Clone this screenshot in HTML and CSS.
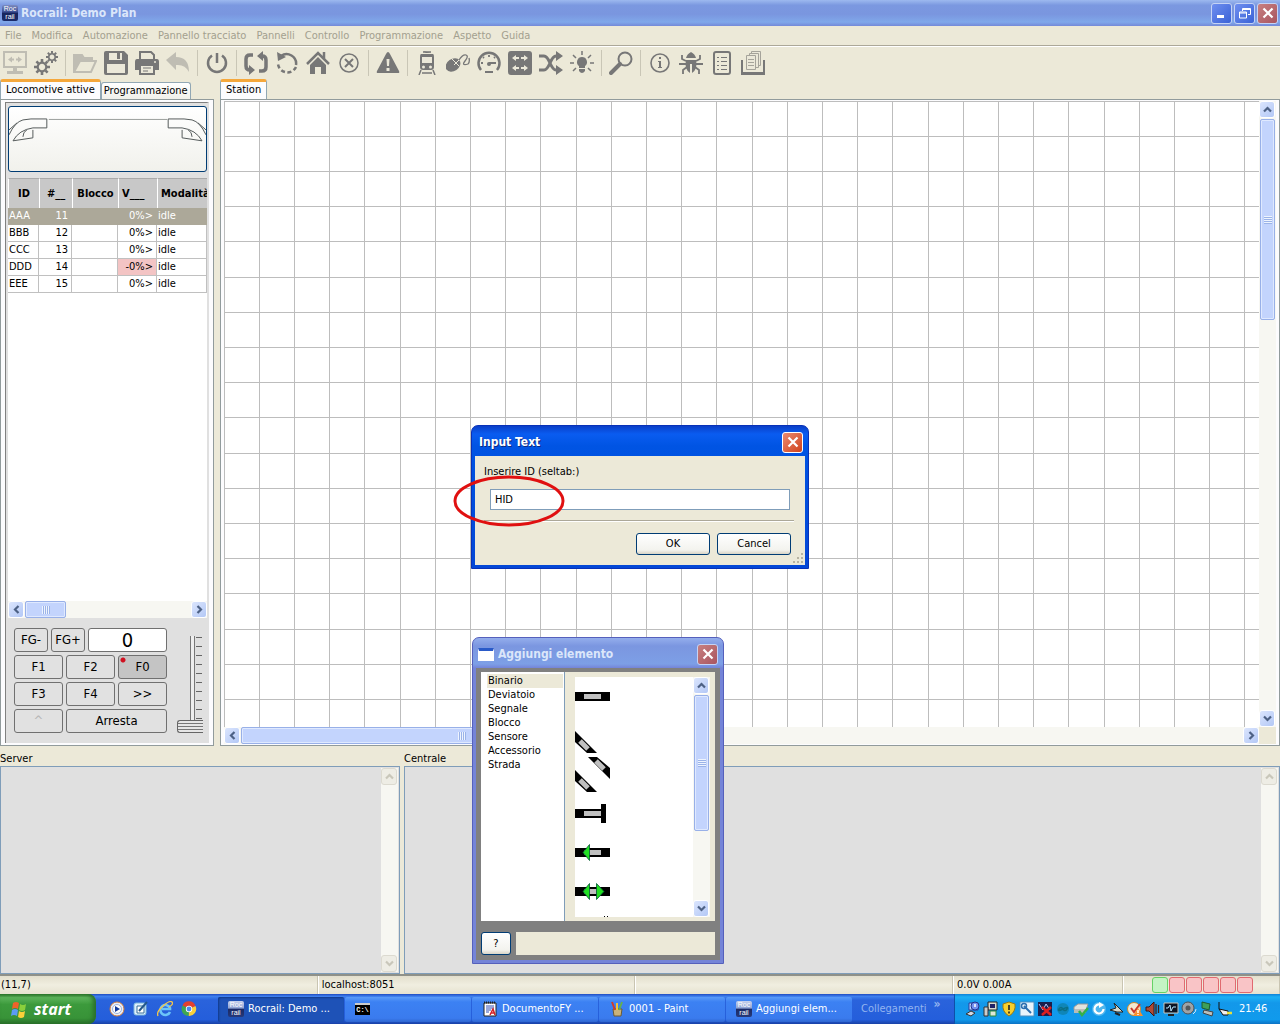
FILE: index.html
```html
<!DOCTYPE html>
<html lang="it">
<head>
<meta charset="utf-8">
<title>Rocrail: Demo Plan</title>
<link rel="stylesheet" href="styles.css">
</head>
<body>
<svg class="defs" aria-hidden="true">
  <defs>
    <pattern id="grid" width="176" height="176" patternUnits="userSpaceOnUse">
      <path d="M.5 0v176M35.500 0v176M70.500 0v176M105.500 0v176M140.500 0v176M0 .5h176M0 35.500h176M0 70.500h176M0 105.500h176M0 140.500h176" stroke="#bdbdbd"/>
    </pattern>
  </defs>
  <symbol id="up" viewBox="0 0 9 9"><path d="M1 6.500l3.500-3.500L8 6.500" fill="none" stroke="currentColor" stroke-width="2.200"/></symbol>
  <symbol id="down" viewBox="0 0 9 9"><path d="M1 2.500L4.500 6 8 2.500" fill="none" stroke="currentColor" stroke-width="2.200"/></symbol>
  <symbol id="left" viewBox="0 0 9 9"><path d="M6.500 1L3 4.500 6.500 8" fill="none" stroke="currentColor" stroke-width="2.200"/></symbol>
  <symbol id="right" viewBox="0 0 9 9"><path d="M2.500 1L6 4.500 2.500 8" fill="none" stroke="currentColor" stroke-width="2.200"/></symbol>
  <symbol id="cross" viewBox="0 0 12 12"><path d="M1.500 1.500l9 9M10.500 1.500l-9 9" stroke="#fff" stroke-width="2.200"/></symbol>
  <symbol id="gear" viewBox="-8 -8 16 16"><circle r="4.300" fill="none" stroke="currentColor" stroke-width="2.200"/><g stroke="currentColor" stroke-width="2.600"><path d="M0-8v3M0 8v-3M-8 0h3M8 0h-3M-5.600-5.600l2 2M5.600 5.600l-2-2M-5.600 5.600l2-2M5.600-5.600l-2 2"/></g></symbol>
</svg>

<header class="titlebar">
  <span class="badge">Roc<br>rail</span>
  <h1>Rocrail: Demo Plan</h1>
  <div class="caption">
    <button class="cap" aria-label="Riduci a icona"><svg width="12" height="12"><path d="M1 8h7v3H1z" fill="#fff"/></svg></button>
    <button class="cap" aria-label="Ripristina"><svg width="12" height="12" fill="none" stroke="#fff"><path d="M3.500 4V1.500h8v6H9M3 2.500h8"/><path d="M.5 5h7v6h-7zM0 6h8"/></svg></button>
    <button class="cap close" aria-label="Chiudi"><svg width="12" height="12"><use href="#cross"/></svg></button>
  </div>
</header>

<nav class="menubar">
  <button>File</button><button>Modifica</button><button>Automazione</button><button>Pannello tracciato</button><button>Pannelli</button><button>Controllo</button><button>Programmazione</button><button>Aspetto</button><button>Guida</button>
</nav>

<div class="toolbar">
  <button class="dim" aria-label="Connetti"><svg viewBox="0 0 24 24"><path d="M1 1h22v15H1z" fill="none" stroke="currentColor" stroke-width="2"/><path d="M10 16h4v4h-4zM4 20h16v3H4z" fill="currentColor"/><path d="M5 8.500l4-3v2h2v2H9v2zM19 8.500l-4-3v2h-2v2h2v2z" fill="currentColor"/></svg></button>
  <button aria-label="Impostazioni"><svg viewBox="0 0 24 24"><use href="#gear" x="0" y="8" width="16" height="16"/><use href="#gear" x="12" y="0" width="12" height="12"/></svg></button>
  <span class="sep"></span>
  <button class="dim" aria-label="Apri"><svg viewBox="0 0 24 24"><path d="M1 21V4h8l2 3h8v3M1 21h17l5-11H7z" fill="none" stroke="currentColor" stroke-width="2"/><path d="M2 5h7l2 3h7v2H7L2 18z" fill="currentColor"/></svg></button>
  <button aria-label="Salva"><svg viewBox="0 0 24 24"><path d="M2 0h18l4 4v18q0 2-2 2H2q-2 0-2-2V2q0-2 2-2z" fill="currentColor"/><path d="M5 2h13v7H5zM3 13h18v9H3z" fill="#ebe8d9"/><path d="M13 2h3v6h-3z" fill="currentColor"/></svg></button>
  <button aria-label="Stampa"><svg viewBox="0 0 24 24"><path d="M5 8V1h11l3 3v4" fill="none" stroke="currentColor" stroke-width="2"/><path d="M2 8h20q2 0 2 3v8h-4v-4H4v4H0v-8q0-3 2-3z" fill="currentColor"/><path d="M5 14h14v9H5z" fill="#ebe8d9" stroke="currentColor" stroke-width="2"/><path d="M8 17h8M8 20h5" stroke="currentColor"/><circle cx="20" cy="11" r="1" fill="#ebe8d9"/></svg></button>
  <button class="dim" aria-label="Annulla"><svg viewBox="0 0 24 24"><path d="M0 9l10-8v5q13 0 13 15-4-8-13-7v5z" fill="currentColor"/></svg></button>
  <span class="sep"></span>
  <button aria-label="Alimentazione"><svg viewBox="0 0 24 24"><path d="M7 4.500a9 9 0 1 0 10 0M12 2v10" fill="none" stroke="currentColor" stroke-width="2.500"/></svg></button>
  <span class="sep"></span>
  <button aria-label="Marcia automatica"><svg viewBox="0 0 24 24"><path d="M9 4H6Q2 4 2 8v7q0 4 4 4M15 20h3q4 0 4-4V9q0-4-4-4" fill="none" stroke="currentColor" stroke-width="3.500"/><path d="M5 14l6 5-6 5zM19 10l-6-5 6-5z" fill="currentColor"/></svg></button>
  <button aria-label="Ripeti"><svg viewBox="0 0 24 24"><path d="M6 5a9.500 9.500 0 0 1 15 9" fill="none" stroke="currentColor" stroke-width="2.500"/><path d="M21 16A9.500 9.500 0 0 1 3 13" fill="none" stroke="currentColor" stroke-width="2.500" stroke-dasharray="4 2.500"/><path d="M2 1l1 9 8-4z" fill="currentColor"/></svg></button>
  <button aria-label="Posizione iniziale"><svg viewBox="0 0 24 24"><path d="M1 13L12 2l11 11M18 1v7" fill="none" stroke="currentColor" stroke-width="2.500"/><path d="M4 14l8-8 8 8v9h-5v-7H9v7H4z" fill="currentColor"/></svg></button>
  <button aria-label="Ferma"><svg viewBox="0 0 24 24"><path d="M8 8l8 8M16 8l-8 8" stroke="currentColor" stroke-width="2"/><circle cx="12" cy="12" r="9" fill="none" stroke="currentColor" stroke-width="1.500"/></svg></button>
  <span class="sep"></span>
  <button aria-label="Emergenza"><svg viewBox="0 0 24 24"><path d="M12 1q1 0 2 2l9 17q1 2-1 2H2q-2 0-1-2l9-17q1-2 2-2z" fill="currentColor"/><path d="M10.500 8h3l-.5 7h-2zM10.500 17h3v3h-3z" fill="#ebe8d9"/></svg></button>
  <span class="sep"></span>
  <button aria-label="Locomotive"><svg viewBox="0 0 24 24"><path d="M8 0l3 2h5M6 3h12q1 0 1 3v10q0 3-3 3H8q-3 0-3-3V6q0-3 1-3z" fill="currentColor"/><path d="M7 6h10v6H7z" fill="#ebe8d9"/><circle cx="8.500" cy="16" r="1.500" fill="#ebe8d9"/><circle cx="15.500" cy="16" r="1.500" fill="#ebe8d9"/><path d="M6 19l-2 5M18 19l2 5M7 22h10M8 1h8" stroke="currentColor" stroke-width="1.500"/></svg></button>
  <button aria-label="Mouse"><svg viewBox="0 0 24 24"><ellipse cx="7" cy="14" rx="8" ry="6" transform="rotate(-35 7 14)" fill="currentColor"/><path d="M5 7l8 8M8 14l5-5" stroke="#ebe8d9"/><path d="M13 9q4-6 7-5t-1 6 3 3q2-2 1-6" fill="none" stroke="currentColor" stroke-width="1.300"/></svg></button>
  <button aria-label="Velocità"><svg viewBox="0 0 24 24"><path d="M4 19a10.500 10.500 0 1 1 16 0" fill="none" stroke="currentColor" stroke-width="2.500"/><path d="M12 12h7M4 12h2M12 4v2M6 6l1 1M18 6l-1 1M8 21h8" stroke="currentColor" stroke-width="1.800"/><circle cx="12" cy="13" r="2" fill="currentColor"/></svg></button>
  <button aria-label="Scambi"><svg viewBox="0 0 24 24"><rect width="24" height="24" rx="3" fill="currentColor"/><g fill="#ebe8d9"><path d="M4 7l4-3v2h3v2H8v2zM4 17l4-3v2h3v2H8v2zM20 7l-4-3v2h-3v2h3v2zM20 17l-4-3v2h-3v2h3v2z"/></g></svg></button>
  <button aria-label="Itinerari"><svg viewBox="0 0 24 24"><path d="M0 5h5q3 0 6 7t6 7h2M0 19h5q3 0 6-7t6-7h2" fill="none" stroke="currentColor" stroke-width="3"/><path d="M17 0l7 5-7 5zM17 14l7 5-7 5z" fill="currentColor"/></svg></button>
  <button aria-label="Luci"><svg viewBox="0 0 24 24"><path d="M12 6a5 5 0 0 1 3 9v2H9v-2a5 5 0 0 1 3-9zM9 18h6v2q-3 4-6 0z" fill="currentColor"/><path d="M12 0v4M0 12h4M20 12h4M3 4l3 3M21 4l-3 3M3 20l3-3M21 20l-3-3" stroke="currentColor" stroke-width="1.500"/></svg></button>
  <span class="sep"></span>
  <button aria-label="Zoom"><svg viewBox="0 0 24 24"><circle cx="16" cy="8" r="6.500" fill="none" stroke="currentColor" stroke-width="2"/><path d="M11 13l-9 9" stroke="currentColor" stroke-width="4" stroke-linecap="round"/></svg></button>
  <span class="sep"></span>
  <button aria-label="Informazioni"><svg viewBox="0 0 24 24"><circle cx="12" cy="12" r="9" fill="none" stroke="currentColor" stroke-width="1.600"/><path d="M11 6h2v2h-2zM10 10h3v6h1v1h-4v-1h1v-5h-1z" fill="currentColor"/></svg></button>
  <button aria-label="Debug"><svg viewBox="0 0 24 24"><path d="M7 7q1-4 5-6 4 2 5 6zM7 9h10q2 9-4 13v-9h-2v9Q5 18 7 9z" fill="currentColor"/><path d="M7 10L3 8V4M17 10l4-2V4M7 13H0M17 13h7M8 16l-4 3v4M16 16l4 3v4" fill="none" stroke="currentColor" stroke-width="1.800"/></svg></button>
  <button aria-label="Elenco"><svg viewBox="0 0 24 24"><rect x="4" y="1" width="16" height="22" rx="2" fill="none" stroke="currentColor" stroke-width="2"/><path d="M7 6.500h2M11 6.500h6M7 10.500h2M11 10.500h6M7 14.500h2M11 14.500h6M7 18.500h2M11 18.500h6" stroke="currentColor"/></svg></button>
  <button aria-label="Documenti"><svg viewBox="0 0 24 24"><path d="M1 9v14h22V9" fill="none" stroke="currentColor" stroke-width="2"/><path d="M1 21h22v3H1z" fill="currentColor"/><g fill="#ebe8d9" stroke="#a5a39a"><path d="M10.500.5h9v14h-9z"/><path d="M8.500 2.500h9v14h-9z"/><path d="M5.500 4.500h9v14h-9z"/><path d="M7 8.500h6M7 11.500h6M7 14.500h6"/></g></svg></button>
</div>

<main class="main">
  <section class="side">
    <div class="tabs"><button class="tab on">Locomotive attive</button><button class="tab">Programmazione</button></div>
    <div class="page side-page">
      <div class="well">
        <button class="loco" aria-label="Immagine locomotiva">
          <svg viewBox="0 2 198 62" fill="none" stroke="#555b5b"><path d="M0 29Q6 16 14 14l8-1h16v9H24Q10 24 4 35l20-3v-8M0 24l8-7M14 31q0-5 4-7"/><path d="M198 29Q192 16 184 14l-8-1h-16v9h14q14 2 20 13l-20-3v-8M198 24l-8-7M184 31q0-5-4-7"/><path d="M40 13.500h119" stroke="#9b9f9c"/></svg>
        </button>
        <div class="list">
          <table>
            <colgroup><col class="c1"><col class="c2"><col class="c3"><col class="c4"><col></colgroup>
            <thead><tr><th>ID</th><th>#__</th><th>Blocco</th><th class="l">V___</th><th class="l">Modalità</th></tr></thead>
            <tbody>
              <tr class="sel"><td>AAA</td><td class="n">11</td><td></td><td class="n">0%&gt;</td><td>idle</td></tr>
              <tr><td>BBB</td><td class="n">12</td><td></td><td class="n">0%&gt;</td><td>idle</td></tr>
              <tr><td>CCC</td><td class="n">13</td><td></td><td class="n">0%&gt;</td><td>idle</td></tr>
              <tr><td>DDD</td><td class="n">14</td><td></td><td class="n rev">-0%&gt;</td><td>idle</td></tr>
              <tr><td>EEE</td><td class="n">15</td><td></td><td class="n">0%&gt;</td><td>idle</td></tr>
            </tbody>
          </table>
        </div>
        <div class="sb h">
          <button aria-label="Sinistra"><svg><use href="#left"/></svg></button><div class="rail"><i class="thumb t-list"></i></div><button aria-label="Destra"><svg><use href="#right"/></svg></button>
        </div>
        <div class="throttle">
          <div class="keys">
            <div class="krow first"><button>FG-</button><button>FG+</button><output>0</output></div>
            <div class="krow"><button>F1</button><button>F2</button><button class="lit">F0</button></div>
            <div class="krow"><button>F3</button><button>F4</button><button>&gt;&gt;</button></div>
            <div class="krow"><button class="off" disabled>^</button><button class="wide">Arresta</button></div>
          </div>
          <input class="slider" type="range" min="0" max="100" value="0" aria-label="Velocità">
        </div>
      </div>
    </div>
  </section>

  <section class="plan">
    <div class="tabs"><button class="tab on">Station</button></div>
    <div class="page plan-page">
      <svg class="canvas"><rect width="100%" height="100%" fill="url(#grid)"/></svg>
      <div class="sb v">
        <button aria-label="Su"><svg><use href="#up"/></svg></button><div class="rail"><i class="thumb t-planv"></i></div><button aria-label="Giù"><svg><use href="#down"/></svg></button>
      </div>
      <div class="sb h">
        <button aria-label="Sinistra"><svg><use href="#left"/></svg></button><div class="rail"><i class="thumb t-planh"></i></div><button aria-label="Destra"><svg><use href="#right"/></svg></button>
      </div>
      <span class="corner"></span>
    </div>
  </section>
</main>

<section class="logs">
  <div class="log"><h2>Server</h2><div class="logbox"><div class="sb v idle"><button disabled aria-label="Su"><svg><use href="#up"/></svg></button><div class="rail"></div><button disabled aria-label="Giù"><svg><use href="#down"/></svg></button></div></div></div>
  <div class="log"><h2>Centrale</h2><div class="logbox"><div class="sb v idle"><button disabled aria-label="Su"><svg><use href="#up"/></svg></button><div class="rail"></div><button disabled aria-label="Giù"><svg><use href="#down"/></svg></button></div></div></div>
</section>

<footer class="status">
  <span>(11,7)</span><span>localhost:8051</span><span></span><span>0.0V 0.00A</span>
  <span class="leds"><i class="ok"></i><i></i><i></i><i></i><i></i><i></i></span>
</footer>

<div class="taskbar">
  <button class="start"><svg width="18" height="17" viewBox="0 0 18 17"><path d="M3 2q3-2 6 0L8 8q-3-2-6 0z" fill="#f0632a"/><path d="M10 3q3 2 6 0l-1 6q-3 2-6 0z" fill="#8bd03c"/><path d="M2 9q3-2 6 0l-1 6q-3-2-6 0z" fill="#5c9bf5"/><path d="M9 10q3 2 6 0l-1 6q-3 2-6 0z" fill="#fbd03a"/></svg>start</button>
  <div class="quick">
    <a href="#" aria-label="Media Player"><svg viewBox="0 0 16 16"><circle cx="8" cy="8" r="7" fill="#e9eef7" stroke="#cf7c3c"/><circle cx="8" cy="8" r="4.500" fill="#fff" stroke="#9db3dd"/><path d="M6 5l5 3-5 3z" fill="#123a9c"/></svg></a>
    <a href="#" aria-label="Mostra desktop"><svg viewBox="0 0 16 16"><rect x="1" y="2" width="12" height="12" rx="2" fill="#dff0fb" stroke="#7db7dc"/><path d="M4 5h7v7H4z" fill="#fff" stroke="#346f9c"/><path d="M6 10l8-9" stroke="#24588c" stroke-width="2"/></svg></a>
    <a href="#" aria-label="Internet Explorer"><svg viewBox="0 0 16 16"><path d="M13 11a5 5 0 1 1 0-4v1H5" fill="none" stroke="#6cc5f8" stroke-width="2.600"/><path d="M1 15Q-1 11 6 5t9-4q2 2-3 5" fill="none" stroke="#f5c64a" stroke-width="1.300"/></svg></a>
    <a href="#" aria-label="Chrome"><svg viewBox="0 0 16 16"><path d="M8 8L1.500 4.500A7 7 0 0 1 14.500 5z" fill="#e2402f"/><path d="M8 8l6.500-3A7 7 0 0 1 7.500 15z" fill="#f8cf3c"/><path d="M8 8l-.5 7A7 7 0 0 1 1.500 4.500z" fill="#3fa652"/><circle cx="8" cy="8" r="3.200" fill="#fff"/><circle cx="8" cy="8" r="2.400" fill="#4a8af0"/></svg></a>
  </div>
  <div class="tasks">
    <button class="task on"><span class="badge">Roc<br>rail</span>Rocrail: Demo ...</button>
    <button class="task" aria-label="Prompt dei comandi"><span class="cmd">C:\</span></button>
    <button class="task"><svg viewBox="0 0 16 16"><path d="M2 2h12v13H2z" fill="#fff" stroke="#222"/><path d="M2 1.500h12" stroke="#222" stroke-width="2" stroke-dasharray="1 1"/><path d="M4 5h8M4 7h8M4 9h5M4 11h3" stroke="#3550b8"/><path d="M8 14l3-6 2 6M9 12h4" fill="none" stroke="#d2232a" stroke-width="1.500"/></svg>DocumentoFY ...</button>
    <button class="task"><svg viewBox="0 0 16 16"><path d="M4 8h9l-1 7H5z" fill="#c9b27a" stroke="#6b5a35"/><path d="M3 1l3 8" stroke="#d23b2a" stroke-width="2"/><path d="M8 2v7" stroke="#f0c23a" stroke-width="2"/><path d="M13 1l-3 8" stroke="#65b04d" stroke-width="2"/></svg>0001 - Paint</button>
    <button class="task"><span class="badge">Roc<br>rail</span>Aggiungi elem...</button>
  </div>
  <div class="links"><span>Collegamenti</span><b>»</b></div>
  <div class="tray">
    <svg viewBox="0 0 16 16"><path d="M4 2h9v7H4z" fill="#bcd4ff" stroke="#2a3c9c"/><circle cx="10" cy="5" r="4" fill="#7390f0" stroke="#24338c"/><path d="M10 3v3" stroke="#fff" stroke-width="1.500"/><path d="M1 13l5-3 4 2-4 3z" fill="#d5d9e4" stroke="#333"/></svg>
    <svg viewBox="0 0 16 16"><path d="M5 1h9v8H5z" fill="#d9dccf" stroke="#222"/><path d="M7 3h5v4H7z" fill="#226"/><path d="M1 6h4v9H1z" fill="#ccc" stroke="#333"/><path d="M7 10h6v5H7z" fill="#dfe8d9" stroke="#2b8a3c"/></svg>
    <svg viewBox="0 0 16 16"><path d="M8 1l6 2q1 8-6 12Q1 11 2 3z" fill="#f8cf2c" stroke="#9a7a10"/><path d="M8 4v5M8 10.500v2" stroke="#222" stroke-width="1.600"/></svg>
    <svg viewBox="0 0 16 16"><path d="M1 1h14v14H1z" fill="#e9f4fc" stroke="#4c8fc0"/><path d="M5 5l7 7" stroke="#2c6fb0" stroke-width="2"/><circle cx="5" cy="5" r="2.500" fill="none" stroke="#2c6fb0" stroke-width="1.500"/></svg>
    <svg viewBox="0 0 16 16"><path d="M1 1h14v14H1z" fill="#1a1d4c"/><path d="M2 3l4 6 3-6 4 6" fill="none" stroke="#b8c8ff"/><path d="M5 6l9 8M14 6l-9 8" stroke="#dc2020" stroke-width="2.500"/></svg>
    <svg viewBox="0 0 16 16"><circle cx="8" cy="8" r="6" fill="#0f86b8"/><path d="M4 8q2-3 4 0t4 0-4 0-4 0" fill="none" stroke="#0b6f86" stroke-width="1.500"/></svg>
    <svg viewBox="0 0 16 16"><path d="M1 6l4-3h10l-2 6H1z" fill="#e3e3dd" stroke="#999"/><path d="M1 9h12v3H1z" fill="#b7bcb7"/><path d="M6 10l3 4 6-7" fill="none" stroke="#35b04a" stroke-width="2.500"/></svg>
    <svg viewBox="0 0 16 16"><circle cx="8" cy="8" r="7" fill="#4fb6ee"/><path d="M12.500 8A4.500 4.500 0 1 1 9 3.600" fill="none" stroke="#fff" stroke-width="2.200"/><path d="M8 1l5 3-5 3z" fill="#fff"/></svg>
    <svg viewBox="0 0 16 16"><path d="M5 2l9 9H8L1 9l6-2z" fill="#d5d8cc" stroke="#222"/><path d="M6 12l5 2" stroke="#222" stroke-width="2"/></svg>
    <svg viewBox="0 0 16 16"><circle cx="7" cy="8" r="6.500" fill="#f3ead0" stroke="#d08a28"/><path d="M4 7l3 4 6-8" fill="none" stroke="#cc3b2a" stroke-width="2"/><path d="M11 7l5 8H6z" fill="#f6902c"/><path d="M11 9v3M11 13v1" stroke="#fff" stroke-width="1.500"/></svg>
    <svg viewBox="0 0 16 16"><path d="M1 6h3l5-5v14l-5-5H1z" fill="#b04b35" stroke="#3c1510"/><path d="M11 3v10M13.500 4v8" stroke="#3c2018" stroke-width="1.300"/></svg>
    <svg viewBox="0 0 16 16"><path d="M1 2h14v10H1z" fill="#0c1524" stroke="#c5c8c0"/><path d="M3 7h2l2-3 1 6 2-4h3" fill="none" stroke="#b9e8ff"/><path d="M5 14h6" stroke="#222" stroke-width="2"/></svg>
    <svg viewBox="0 0 16 16"><circle cx="7" cy="7" r="6" fill="#9fa3a6" stroke="#4d5154"/><circle cx="7" cy="7" r="2.500" fill="#54585b"/><path d="M12 13q3-2 3-5" fill="none" stroke="#d6e9f8"/></svg>
    <svg viewBox="0 0 16 16"><path d="M3 1l8 2-1 6-7-2z" fill="#3fa058" stroke="#1d5a30"/><path d="M5 9l9 2-1 4-9-3z" fill="#bcc0bd" stroke="#444"/></svg>
    <svg viewBox="0 0 16 16"><path d="M2 1v7l9 2v4H6L2 8" fill="#eee" stroke="#111"/><path d="M10 12h5" stroke="#e8e03a" stroke-width="2.500"/></svg>
    <time>21.46</time>
  </div>
</div>

<section class="win picker">
  <header><span class="winicon"></span><h2>Aggiungi elemento</h2><button class="cap close" aria-label="Chiudi"><svg width="12" height="12"><use href="#cross"/></svg></button></header>
  <div class="picker-body">
    <ul><li class="on">Binario</li><li>Deviatoio</li><li>Segnale</li><li>Blocco</li><li>Sensore</li><li>Accessorio</li><li>Strada</li></ul>
    <div class="pieces">
      <svg class="tracks" viewBox="0 0 118 240" preserveAspectRatio="xMinYMin slice">
        <g shape-rendering="crispEdges">
          <path d="M0 15h35v9H0zM0 132h29v9H0zM26 127h5v19h-5zM0 171h35v9H0zM0 210h35v9H0zM29 239h1v1h-1zM32 239h1v1h-1z"/>
          <path d="M9 17h17v5H9zM9 134h17v5H9zM9 173h17v5H9zM9 212h17v5H9z" fill="#c0c0c0"/>
        </g>
        <path d="M0 54v11l12 11h10zM13 80h9l13 11v11zM0 93v11l12 11h10z"/>
        <path d="M5 64l8 8M21 84l8 8M5 103l8 8" stroke="#c0c0c0" stroke-width="5"/>
        <path d="M8 175.500l6.500-8v16zM8 214.500l6.500-8v16zM29 214.500l-7.500-8v16z" fill="#22e022" stroke="#053" stroke-width=".8"/>
      </svg>
      <div class="sb v">
        <button aria-label="Su"><svg><use href="#up"/></svg></button><div class="rail"><i class="thumb t-pick"></i></div><button aria-label="Giù"><svg><use href="#down"/></svg></button>
      </div>
    </div>
  </div>
  <div class="picker-foot"><button class="xp" aria-label="Aiuto">?</button><output></output></div>
</section>

<section class="win dialog" role="dialog" aria-label="Input Text">
  <header><h2>Input Text</h2><button class="cap close" aria-label="Chiudi"><svg width="12" height="12"><use href="#cross"/></svg></button></header>
  <form>
    <label for="newid">Inserire ID (seltab:)</label>
    <input id="newid" type="text" value="HID">
    <hr>
    <div class="actions"><button type="button" class="xp">OK</button><button type="button" class="xp">Cancel</button></div>
    <svg class="grip" width="11" height="11"><path d="M8 0h2v2H8zM4 4h2v2H4zM8 4h2v2H8zM0 8h2v2H0zM4 8h2v2H4zM8 8h2v2H8z" fill="#b8b4a2"/></svg>
  </form>
</section>
<svg class="mark" width="112" height="52"><ellipse cx="56" cy="26" rx="54" ry="24" fill="none" stroke="#e01010" stroke-width="3"/></svg>
</body>
</html>
```
FILE: styles.css
```css
* { box-sizing: border-box; }
body {
  margin: 0;
  min-height: 100vh;
  display: flex;
  flex-direction: column;
  position: relative;
  background: #ece9d8;
  color: #000;
  font: 11px/14px "DejaVu Sans Condensed", "DejaVu Sans", sans-serif;
}
button, input { font: inherit; color: inherit; margin: 0; padding: 0; border: 0; background: none; }
h1, h2, ul { margin: 0; padding: 0; font-size: 11px; font-weight: normal; list-style: none; }
.defs { position: absolute; width: 0; height: 0; }

/* Main window caption */
.titlebar {
  height: 26px;
  padding: 0 2px;
  display: flex;
  align-items: center;
  gap: 3px;
  background: linear-gradient(#9db9ef, #7b98e0 20%, #7a96df 55%, #80a8ea 85%, #7489d8);
}
.titlebar h1, .win h2 {
  flex: 1;
  font: bold 12px/16px "DejaVu Sans Condensed", "DejaVu Sans", sans-serif;
  color: #dbe6fa;
}
.badge {
  flex: none;
  width: 16px;
  height: 16px;
  border-radius: 2px;
  background: linear-gradient(#c8d2ec, #8ea3d4 45%, #1a2a66 50%, #26397a);
  color: #fff;
  font: 7px/8px "Liberation Sans", sans-serif;
  text-align: center;
}
.titlebar .badge { background: linear-gradient(#7d8cc0, #3a4c90 45%, #16245c 50%, #1c2c6a); }
.caption { display: flex; gap: 2px; }
.cap {
  width: 21px;
  height: 21px;
  display: grid;
  place-items: center;
  border: 1px solid #c5d3f5;
  border-radius: 3px;
  background: linear-gradient(135deg, #6f8ff0, #3a62d6);
}
.cap.close { background: linear-gradient(135deg, #c88080, #a85560); }

.menubar {
  height: 20px;
  padding: 0 5px;
  display: flex;
  align-items: center;
  gap: 10px;
  border-bottom: 1px solid #aca899;
  color: #a3a08f;
}
.toolbar {
  height: 33px;
  padding: 0 3px;
  display: flex;
  align-items: center;
  gap: 7px;
  border-top: 1px solid #fff;
  color: #777;
}
.toolbar button, .toolbar svg { display: block; width: 24px; height: 24px; }
.toolbar .dim { color: #bfbdb3; }
.sep { width: 1px; height: 26px; background: #c9c6b6; }

/* Tabbed panes */
.main { flex: 1; display: flex; gap: 6px; min-height: 0; }
.side { width: 214px; display: flex; flex-direction: column; }
.plan { flex: 1; min-width: 0; display: flex; flex-direction: column; }
.tabs { height: 20px; display: flex; align-items: flex-end; }
.tab {
  height: 17px;
  padding: 0 2px;
  border: 1px solid #91a7b4;
  border-bottom: 0;
  border-radius: 3px 3px 0 0;
  background: linear-gradient(#fff, #f0f0ea);
}
.tab.on { height: 20px; padding: 0 5px 2px; border-top: 3px solid #f5a83c; background: #fcfcfe; }
.page { flex: 1; min-height: 0; border: 1px solid #919b9c; background: #fcfcfe; }
.side-page { padding: 2px 4px; }
.well {
  height: 100%;
  display: flex;
  flex-direction: column;
  padding: 3px 0 0 2px;
  border-left: 1px solid #808080;
  border-top: 1px solid #808080;
  border-right: 2px solid #e0e0e0;
  background: #e0e0e0;
}
.loco {
  height: 66px;
  margin-bottom: 6px;
  border: 1px solid #003c74;
  border-radius: 3px;
  background: linear-gradient(#fff, #f1f1ec);
}
.loco svg { display: block; width: 100%; }
.list { flex: 1; overflow: hidden; background: #fff; }
table { width: 100%; table-layout: fixed; border-collapse: separate; border-spacing: 0; }
.c1 { width: 31px; }
.c2 { width: 33px; }
.c3 { width: 46px; }
.c4 { width: 39px; }
th {
  height: 30px;
  padding: 0;
  overflow: hidden;
  white-space: nowrap;
  border-left: 1px solid #fff;
  border-top: 1px solid #aaa;
  background: #c8c8c8;
}
th.l { text-align: left; padding-left: 3px; }
td {
  height: 17px;
  padding: 0 1px;
  line-height: 16px;
  white-space: nowrap;
  border-right: 1px solid #c0c0c0;
  border-bottom: 1px solid #c0c0c0;
}
.n { text-align: right; padding-right: 3px; }
.rev { background: #f3c4c4; }
.sel td { background: #aca899; border-color: #aca899; color: #fff; }

/* Scroll bars */
.sb { display: flex; background: #f7f7f2; }
.sb.v { flex-direction: column; width: 17px; }
.sb.h { height: 17px; }
.sb button {
  flex: none;
  width: 16px;
  height: 17px;
  display: grid;
  place-items: center;
  border: 1px solid #fff;
  border-radius: 3px;
  background: linear-gradient(135deg, #dbe5fd, #b3c8f6);
  color: #4d6185;
}
.sb svg { width: 9px; height: 9px; }
.rail { flex: 1; display: flex; }
.v > .rail { flex-direction: column; }
.thumb {
  display: grid;
  place-items: center;
  border: 1px solid #98b0e8;
  border-radius: 2px;
  background: #c3d4fd;
  box-shadow: inset 0 0 0 1px #dfe9ff;
}
.thumb::after { content: ""; width: 8px; height: 8px; background: repeating-linear-gradient(90deg, #eef4fe 0 1px, #9bb3e8 1px 2px); }
.v .thumb { width: 15px; margin: 1px; }
.v .thumb::after { background: repeating-linear-gradient(#eef4fe 0 1px, #9bb3e8 1px 2px); }
.t-list { width: 41px; margin: 0 1px; }
.t-planv { height: 34%; }
.t-planh { width: 44%; margin: 0 1px; }
.t-pick { height: 66%; }
.idle button { background: #eeede5; border-color: #dcdad0; color: #c9c7ba; }

/* Throttle */
.throttle { height: 125px; padding: 10px 4px 0 6px; display: flex; justify-content: space-between; }
.keys { width: 153px; display: flex; flex-direction: column; gap: 3px; }
.krow { display: flex; gap: 3px; }
.krow > * {
  width: 49px;
  height: 24px;
  display: block;
  border: 1px solid #707070;
  border-radius: 3px;
  background: #e1e1e1;
  font-size: 13px;
  line-height: 22px;
  text-align: center;
}
.first > * { width: 34px; }
.first output { flex: 1; background: #fff; font-size: 20px; }
.krow .wide { flex: 1; }
.krow .off { color: #b5b5b5; }
.krow .lit { background: radial-gradient(circle at 4px 4px, #d01020 0 2px, transparent 3px), #c4c4c4; }
.slider {
  appearance: none;
  writing-mode: vertical-lr;
  direction: rtl;
  width: 26px;
  height: 97px;
  margin-top: 8px;
  background:
    linear-gradient(90deg, #777 0 1px, #eee 1px 4px, #777 4px 5px) 13px 0 / 5px 90px no-repeat,
    repeating-linear-gradient(#666 0 1px, transparent 1px 9px) 19px 1px / 6px 84px no-repeat;
}
.slider::-webkit-slider-thumb {
  appearance: none;
  width: 26px;
  height: 13px;
  border: 1px solid #666;
  border-right: 0;
  border-radius: 3px 0 0 3px;
  background: repeating-linear-gradient(#e6e6e6 0 2px, #777 2px 3px);
}

.plan-page { display: grid; grid-template-columns: 1fr 17px; grid-template-rows: 1fr 17px; padding: 1px 3px; }
.canvas { display: block; width: 100%; height: 100%; background: #fff; }
.corner { background: #ece9d8; }

/* Log panes */
.logs { display: flex; gap: 4px; height: 228px; padding-top: 6px; }
.log { width: 400px; display: flex; flex-direction: column; }
.log + .log { flex: 1; }
.logbox {
  flex: 1;
  display: flex;
  justify-content: flex-end;
  padding: 1px;
  border: 1px solid #7f9db9;
  background: #e0e0e0;
}

.status {
  height: 20px;
  display: grid;
  grid-template-columns: 1fr 1fr 1fr 170px 157px;
  border-top: 2px solid #8f9189;
  background: linear-gradient(#e3dfcd, #f0eee0 50%, #e6e2d0);
}
.status span { padding: 2px 2px 0 3px; border-left: 1px solid #fff; border-right: 1px solid #c9c5b2; }
.status span:first-child { padding-left: 1px; border-left: 0; }
.status .leds { display: flex; gap: 1px; padding: 1px 0 0 28px; }
.leds i { width: 16px; height: 16px; border: 1px solid #e06a70; border-radius: 3px; background: #f9c4c6; }
.leds .ok { border-color: #66d266; background: #c4f4c4; }

/* Taskbar */
.taskbar { height: 30px; display: flex; background: linear-gradient(#1f4bc0, #3f80ee 8%, #2a63dc 20%, #245edb 85%, #1941a5); color: #fff; }
.start {
  width: 96px;
  display: flex;
  align-items: center;
  gap: 6px;
  padding-left: 10px;
  border-radius: 0 8px 8px 0;
  background: linear-gradient(#2c7a2c, #5cb35a 12%, #3c9a3c 35%, #389338 80%, #28702a);
  box-shadow: inset -3px 0 4px #2a6f2a;
  font: italic bold 16px/20px "Open Sans", sans-serif;
}
.quick { width: 122px; display: flex; align-items: center; gap: 8px; padding-left: 13px; }
.quick a, .quick svg { display: block; width: 16px; height: 16px; }
.tasks { display: flex; flex: 1; align-items: center; gap: 1px; min-width: 0; }
.task {
  flex: 0 1 126px;
  height: 25px;
  display: flex;
  align-items: center;
  gap: 4px;
  padding-left: 10px;
  overflow: hidden;
  white-space: nowrap;
  border-radius: 2px;
  background: linear-gradient(#5a9bf8, #3c81f3 20%, #3a7bee 85%, #2f66d0);
}
.task.on { background: #1e52b7; box-shadow: inset 1px 1px 2px #123a8a; }
.task svg { flex: none; width: 16px; height: 16px; }
.cmd { width: 15px; height: 12px; border-top: 2px solid #ccc; background: #000; font: bold 7px/10px "Liberation Mono", monospace; text-align: center; }
.links { width: 93px; display: flex; gap: 7px; padding: 8px 0 0; color: #93b4f0; }
.links b { font-size: 12px; line-height: 4px; }
.tray {
  width: 326px;
  display: flex;
  align-items: center;
  gap: 2px;
  padding-left: 10px;
  border-left: 1px solid #0f4fa8;
  background: linear-gradient(#1082d8, #1cb0f5 10%, #1398ea 30%, #109aec 85%, #0c72c4);
}
.tray svg { flex: none; width: 16px; height: 16px; }
.tray time { margin-left: 4px; }

/* Floating windows */
.win { position: absolute; display: flex; flex-direction: column; border-radius: 7px 7px 0 0; }
.win header { height: 30px; padding: 2px 5px 0; display: flex; align-items: center; gap: 4px; }
.dialog {
  left: 471px;
  top: 425px;
  width: 338px;
  background: linear-gradient(#0a3fc8, #0a5cf0 8px, #0054e3 20px, #0347d6);
  border: 1px solid #0831b8;
}
.dialog h2 { color: #fff; padding-left: 2px; text-shadow: 1px 1px #0b2a80; }
.dialog .close { border-color: #fff; background: linear-gradient(135deg, #ea8a70, #d0421c); }
.dialog form { position: relative; margin: 0 3px 3px; padding: 9px 11px 10px 9px; background: #ece9d8; }
.dialog label { display: block; margin-bottom: 10px; }
.dialog input { display: block; width: 300px; height: 21px; margin-left: 6px; padding: 0 4px; border: 1px solid #7f9db9; background: #fff; }
.dialog hr { height: 2px; margin: 10px 0 11px; border: 0; border-top: 1px solid #aca899; border-bottom: 1px solid #fff; }
.actions { display: flex; justify-content: flex-end; gap: 7px; padding-right: 3px; }
.xp { height: 22px; border: 1px solid #003c74; border-radius: 3px; background: linear-gradient(#fff, #f3f3ee 80%, #d8d4c6); }
.actions .xp { width: 74px; }
.grip { position: absolute; right: 1px; bottom: 1px; }

.picker {
  left: 472px;
  top: 637px;
  width: 252px;
  border: 1px solid #5560bc;
  background: linear-gradient(#94aeec, #7b96e0 8px, #7d9fe6 26px, #7484d8 30px);
}
.winicon { width: 16px; height: 13px; border: 1px solid #fff; border-top: 3px solid #2a5ac8; background: #fff; }
.picker-body { margin: 0 3px; padding: 4px 5px 11px; height: 264px; display: flex; background: #808080; }
.picker ul { width: 84px; padding: 2px 1px 0 6px; border-right: 1px solid #7f9db9; background: #fff; }
.picker li { padding-left: 1px; line-height: 14px; }
.picker li.on { background: #ece9d8; }
.pieces { flex: 1; display: flex; padding: 5px 5px 4px 10px; background: #ece9d8; }
.tracks { flex: 1; min-width: 0; height: 240px; background: #fff; }
.picker-foot { margin: 0 3px 3px; padding: 0 5px 5px; display: flex; gap: 5px; background: #808080; }
.picker-foot .xp { width: 30px; height: 23px; }
.picker-foot output { flex: 1; background: #ece9d8; }

.mark { position: absolute; left: 453px; top: 475px; pointer-events: none; }
```
